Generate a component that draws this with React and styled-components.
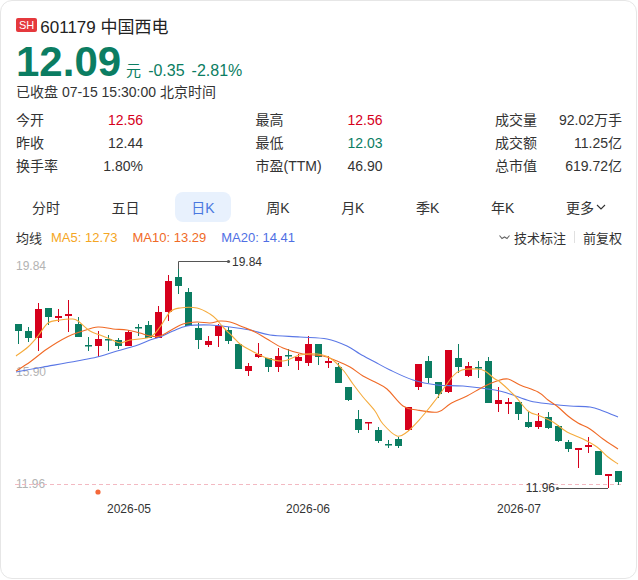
import React from "react";
import styled, { createGlobalStyle } from "styled-components";

const RED = "#d6001c";
const GREEN = "#0b7d62";

const GlobalStyle = createGlobalStyle`
  body {
    margin: 0;
    background: #fff;
    font-family: "Liberation Sans", "Noto Sans CJK SC", sans-serif;
  }
`;

// [color, bodyTop, bodyBottom, wickTop, wickBottom]
const candles = [
  ["g", 325, 332, 325, 345], ["g", 332, 339, 328, 343], ["r", 310, 339, 304, 352],
  ["g", 309, 318, 309, 326], ["r", 317, 319, 310, 323], ["r", 315, 317, 301, 333],
  ["g", 325, 338, 318, 338], ["g", 346, 347, 338, 352], ["r", 340, 347, 332, 358],
  ["g", 340, 341, 336, 352], ["g", 341, 347, 339, 350], ["r", 333, 347, 331, 347],
  ["g", 328, 329, 325, 337], ["g", 326, 339, 322, 339], ["r", 313, 339, 307, 339],
  ["r", 282, 313, 276, 322], ["g", 278, 287, 270, 295], ["g", 293, 327, 289, 327],
  ["g", 329, 341, 324, 350], ["r", 342, 346, 337, 348], ["r", 327, 337, 325, 348],
  ["g", 331, 342, 328, 345], ["g", 345, 370, 345, 370], ["r", 367, 372, 364, 377],
  ["r", 355, 358, 344, 359], ["g", 359, 368, 359, 373], ["r", 357, 368, 349, 373],
  ["g", 356, 357, 350, 367], ["r", 358, 362, 355, 371], ["r", 345, 364, 337, 367],
  ["g", 345, 358, 345, 366], ["r", 362, 364, 357, 369], ["g", 368, 384, 364, 384],
  ["g", 388, 401, 388, 402], ["g", 420, 431, 411, 434], ["r", 423, 424, 423, 431],
  ["g", 431, 442, 428, 444], ["g", 445, 446, 441, 449], ["g", 440, 447, 438, 449],
  ["r", 408, 431, 408, 432], ["r", 365, 388, 365, 391], ["g", 362, 379, 357, 384],
  ["g", 383, 395, 383, 399], ["r", 351, 393, 351, 394], ["g", 359, 368, 345, 374],
  ["r", 367, 377, 363, 378], ["g", 368, 369, 362, 379], ["g", 362, 404, 358, 404],
  ["r", 401, 405, 388, 413], ["r", 403, 405, 399, 415], ["g", 403, 415, 403, 421],
  ["g", 423, 428, 413, 429], ["r", 422, 428, 414, 430], ["g", 418, 429, 413, 430],
  ["g", 427, 442, 426, 443], ["g", 443, 450, 441, 453], ["r", 449, 451, 449, 469],
  ["r", 446, 448, 438, 454], ["g", 452, 476, 452, 476], ["r", 475, 477, 475, 489],
  ["g", 472, 483, 472, 486],
];

const ma5 = [
  [16, 357], [28, 348], [38, 337], [48, 324], [60, 321], [72, 320], [78, 322], [90, 332],
  [100, 336], [110, 340], [120, 344], [130, 341], [150, 338], [160, 328], [170, 313],
  [180, 309], [197, 309], [210, 315], [217, 321], [223, 328], [233, 338], [240, 345],
  [250, 351], [267, 359], [283, 362], [300, 356], [317, 355], [330, 359], [343, 371],
  [353, 385], [363, 398], [375, 412], [383, 425], [397, 437], [407, 433], [420, 420],
  [430, 408], [440, 395], [453, 377], [462, 371], [477, 370], [485, 372], [495, 380],
  [500, 383], [515, 397], [528, 412], [540, 417], [553, 423], [567, 433], [583, 440],
  [597, 448], [608, 458], [618, 465],
];

const ma10 = [
  [16, 372], [30, 363], [47, 350], [67, 338], [83, 332], [98, 328], [113, 330], [127, 331],
  [140, 334], [150, 337], [160, 337], [173, 330], [183, 325], [197, 323], [210, 324],
  [220, 322], [230, 323], [243, 328], [255, 333], [267, 340], [283, 349], [303, 355],
  [323, 357], [337, 362], [350, 368], [363, 377], [375, 383], [387, 390], [403, 407],
  [417, 411], [438, 413], [450, 405], [467, 397], [483, 388], [497, 382], [508, 380],
  [520, 386], [538, 393], [548, 401], [558, 408], [568, 417], [578, 424], [590, 430],
  [603, 440], [618, 450],
];

const ma20 = [
  [16, 373], [43, 368], [77, 362], [97, 358], [117, 352], [135, 347], [150, 341],
  [160, 338], [173, 332], [187, 327], [210, 326], [230, 328], [250, 331], [270, 336],
  [300, 338], [327, 340], [347, 347], [360, 355], [375, 363], [390, 371], [413, 381],
  [437, 386], [463, 387], [495, 391], [510, 395], [530, 402], [550, 405], [570, 407],
  [590, 408], [603, 412], [618, 418],
];

// catmull-rom -> bezier
const smooth = (pts) => {
  let d = `M${pts[0][0]} ${pts[0][1]}`;
  for (let i = 0; i < pts.length - 1; i++) {
    const p0 = pts[i - 1] || pts[i];
    const p1 = pts[i];
    const p2 = pts[i + 1];
    const p3 = pts[i + 2] || p2;
    const c1x = p1[0] + (p2[0] - p0[0]) / 6;
    const c1y = p1[1] + (p2[1] - p0[1]) / 6;
    const c2x = p2[0] - (p3[0] - p1[0]) / 6;
    const c2y = p2[1] - (p3[1] - p1[1]) / 6;
    d += ` C${c1x.toFixed(1)} ${c1y.toFixed(1)} ${c2x.toFixed(1)} ${c2y.toFixed(1)} ${p2[0]} ${p2[1]}`;
  }
  return d;
};

const stats = [
  [
    { label: "今开", value: "12.56", tone: "up" },
    { label: "昨收", value: "12.44" },
    { label: "换手率", value: "1.80%" },
  ],
  [
    { label: "最高", value: "12.56", tone: "up" },
    { label: "最低", value: "12.03", tone: "down" },
    { label: "市盈(TTM)", value: "46.90" },
  ],
  [
    { label: "成交量", value: "92.02万手" },
    { label: "成交额", value: "11.25亿" },
    { label: "总市值", value: "619.72亿" },
  ],
];

const tabs = ["分时", "五日", "日K", "周K", "月K", "季K", "年K"];

const KChart = () => (
  <ChartSvg width="635" height="275" viewBox="1 250 635 275">
    <AxisText x="16" y="271">19.84</AxisText>
    <AxisText x="16" y="377">15.90</AxisText>
    <AxisText x="16" y="489">11.96</AxisText>
    <line x1="15" y1="485.5" x2="622" y2="485.5" stroke="#f3b9c2" strokeDasharray="4 3" />

    {candles.map(([c, bt, bb, wt, wb], i) => {
      const cx = 18 + i * 10;
      const color = c === "r" ? RED : GREEN;
      const h = Math.max(bb - bt, 1.5);
      return (
        <g key={i}>
          <line x1={cx + 0.5} y1={wt} x2={cx + 0.5} y2={wb} stroke={color} strokeWidth="1" />
          <rect x={cx - 3} y={bt} width="7" height={h} fill={color} />
        </g>
      );
    })}

    <path d={smooth(ma20)} fill="none" stroke="#5a77e6" strokeWidth="1.1" />
    <path d={smooth(ma10)} fill="none" stroke="#f06a26" strokeWidth="1.1" />
    <path d={smooth(ma5)} fill="none" stroke="#f5ab3c" strokeWidth="1.1" />

    <path d="M178.5 270 V262.5 H228" fill="none" stroke="#555" strokeWidth="1" />
    <circle cx="228.5" cy="262.5" r="1.6" fill="#555" />
    <MarkText x="232" y="266.5">19.84</MarkText>

    <path d="M608 489.5 H558" fill="none" stroke="#555" strokeWidth="1" />
    <circle cx="557.5" cy="489.5" r="1.6" fill="#555" />
    <MarkText x="555" y="493" textAnchor="end">11.96</MarkText>

    <circle cx="98" cy="493" r="2.6" fill="#f4683a" />

    <DateText x="129" y="514" textAnchor="middle">2026-05</DateText>
    <DateText x="308" y="514" textAnchor="middle">2026-06</DateText>
    <DateText x="519" y="514" textAnchor="middle">2026-07</DateText>
  </ChartSvg>
);

const App = () => {
  return (
    <React.Fragment>
      <GlobalStyle />
      <Card>
        <TitleRow>
          <Badge>SH</Badge>
          <Name>601179 中国西电</Name>
        </TitleRow>

        <PriceRow>
          <Price>12.09</Price>
          <Unit>元</Unit>
          <Change>-0.35</Change>
          <Change>-2.81%</Change>
        </PriceRow>
        <Status>已收盘 07-15 15:30:00 北京时间</Status>

        <StatsGrid>
          {stats.map((group, gi) => (
            <StatGroup key={gi}>
              {group.map((s) => (
                <StatRow key={s.label}>
                  <StatLabel>{s.label}</StatLabel>
                  <StatValue tone={s.tone}>{s.value}</StatValue>
                </StatRow>
              ))}
            </StatGroup>
          ))}
        </StatsGrid>

        <TabBar>
          {tabs.map((t) => (
            <Tab key={t} active={t === "日K"}>
              {t}
            </Tab>
          ))}
          <Tab>
            更多
            <svg width="10" height="6" viewBox="0 0 10 6">
              <path d="M1 1 L5 5 L9 1" fill="none" stroke="#333" strokeWidth="1.1" />
            </svg>
          </Tab>
        </TabBar>

        <Legend>
          <LegendLeft>
            <LegendTitle>均线</LegendTitle>
            <MaText color="#f5a623">MA5: 12.73</MaText>
            <MaText color="#f06a26">MA10: 13.29</MaText>
            <MaText color="#4f6fe4">MA20: 14.41</MaText>
          </LegendLeft>
          <LegendRight>
            <svg width="11" height="6" viewBox="0 0 11 6">
              <path d="M0.5 1.5 L3 4.5 L5.5 3 L8 4.5 L10.5 1.5" fill="none" stroke="#666" strokeWidth="1.1" />
            </svg>
            <RightLink>技术标注</RightLink>
            <Divider />
            <RightLink>前复权</RightLink>
          </LegendRight>
        </Legend>

        <KChart />
      </Card>
    </React.Fragment>
  );
};

const Card = styled.div`
  width: 637px;
  height: 579px;
  box-sizing: border-box;
  border: 1px solid #e6e6e6;
  border-radius: 12px;
  padding: 12px 14px 0 15px;
  overflow: hidden;
  background: #fff;
`;

const TitleRow = styled.div`
  display: flex;
  align-items: center;
  height: 24px;
`;

const Badge = styled.span`
  display: inline-block;
  height: 14px;
  line-height: 14px;
  padding: 0 3px;
  margin-right: 3px;
  border-radius: 2px;
  background: #e5393d;
  color: #fff;
  font-size: 11px;
`;

const Name = styled.span`
  font-size: 17px;
  color: #222;
`;

const PriceRow = styled.div`
  display: flex;
  align-items: baseline;
  margin-top: 4px;
  color: ${GREEN};
`;

const Price = styled.span`
  font-size: 42px;
  line-height: 42px;
  font-weight: 700;
`;

const Unit = styled.span`
  font-size: 15px;
  line-height: 1;
  margin-left: 5px;
`;

const Change = styled.span`
  font-size: 16px;
  line-height: 1;
  margin-left: 7px;
`;

const Status = styled.div`
  font-size: 14px;
  line-height: 18px;
  color: #333;
`;

const StatsGrid = styled.div`
  display: flex;
  justify-content: space-between;
  margin-top: 8px;
`;

const StatGroup = styled.div`
  width: 127px;
  display: flex;
  flex-direction: column;
`;

const StatRow = styled.div`
  display: flex;
  justify-content: space-between;
  height: 23px;
  line-height: 23px;
  font-size: 14px;
`;

const StatLabel = styled.span`
  color: #333;
`;

const StatValue = styled.span`
  color: ${(p) => (p.tone === "up" ? RED : p.tone === "down" ? GREEN : "#333")};
`;

const TabBar = styled.div`
  display: flex;
  justify-content: space-between;
  margin-top: 14px;
`;

const Tab = styled.div`
  display: flex;
  align-items: center;
  gap: 2px;
  height: 30px;
  padding: 0 16px;
  border-radius: 8px;
  font-size: 14px;
  color: ${(p) => (p.active ? "#4a78e0" : "#333")};
  background: ${(p) => (p.active ? "#e8f1fd" : "transparent")};
`;

const Legend = styled.div`
  display: flex;
  justify-content: space-between;
  align-items: center;
  height: 20px;
  margin-top: 5px;
  font-size: 13px;
`;

const LegendLeft = styled.div`
  display: flex;
  align-items: center;
  gap: 15px;
`;

const LegendTitle = styled.span`
  color: #333;
  margin-right: -6px;
`;

const MaText = styled.span`
  color: ${(p) => p.color};
`;

const LegendRight = styled.div`
  display: flex;
  align-items: center;
  gap: 4px;
  color: #333;
`;

const RightLink = styled.span`
  color: #333;
`;

const Divider = styled.span`
  width: 1px;
  height: 12px;
  background: #e0e0e0;
  margin: 0 4px;
`;

const ChartSvg = styled.svg`
  display: block;
  margin: 2px -14px 0 -15px;
`;

const AxisText = styled.text`
  font-size: 12px;
  fill: #b3b3b3;
`;

const MarkText = styled.text`
  font-size: 12px;
  fill: #333;
`;

const DateText = styled.text`
  font-size: 12px;
  fill: #333;
`;

export default App;
